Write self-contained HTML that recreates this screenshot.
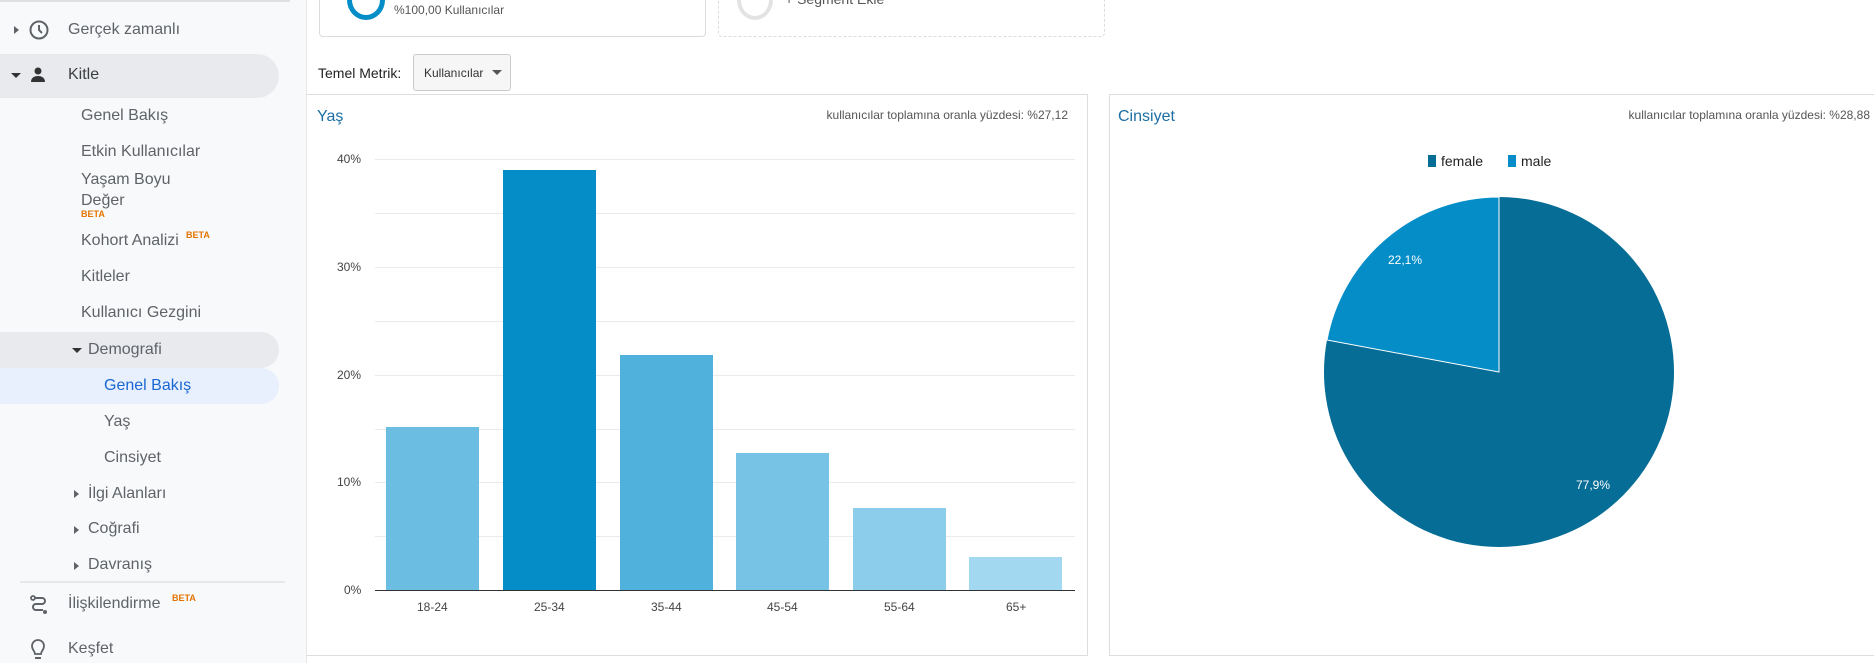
<!DOCTYPE html>
<html><head><meta charset="utf-8"><style>
*{margin:0;padding:0;box-sizing:border-box}
body{width:1874px;height:663px;overflow:hidden;background:#fff;font-family:"Liberation Sans",sans-serif;position:relative}
.sb{position:absolute;left:0;top:0;width:307px;height:663px;background:#f8f9fa;border-right:1px solid #e6e6e6}
.t{position:absolute;color:#5f6368;font-size:16px;white-space:nowrap}
.pill{position:absolute;left:0;width:279px;border-radius:0 22px 22px 0}
.beta{color:#e37400;font-size:9px;font-weight:bold;position:absolute}
.tri{position:absolute;width:0;height:0}
.down{border-left:5px solid transparent;border-right:5px solid transparent;border-top:5px solid #333}
.right{border-top:4px solid transparent;border-bottom:4px solid transparent;border-left:5px solid #5f6368}
.c{position:absolute;font-size:12px;color:#444;white-space:nowrap}
.bar{position:absolute;width:93px}
.grid{position:absolute;left:375px;width:700px;height:1px;background:#ebebeb}
</style></head><body>
<div class="sb">
 <div style="position:absolute;left:0;top:0;width:290px;height:2px;background:#e0e0e0"></div>
 <div class="tri right" style="left:14px;top:26px"></div>
 <svg style="position:absolute;left:28px;top:19px" width="22" height="22" viewBox="0 0 22 22"><circle cx="11" cy="11" r="8.5" fill="none" stroke="#5f6368" stroke-width="2"/><path d="M11 6v5l3 3" fill="none" stroke="#5f6368" stroke-width="2"/></svg>
 <div class="t" style="left:68px;top:21px">Gerçek zamanlı</div>
 <div class="pill" style="top:54px;height:44px;background:#e8eaed"></div>
 <div class="tri down" style="left:11px;top:73px"></div>
 <svg style="position:absolute;left:29px;top:66px" width="18" height="18" viewBox="0 0 18 18"><circle cx="9" cy="5" r="3.5" fill="#333"/><path d="M2 16c0-4 3-6 7-6s7 2 7 6z" fill="#333"/></svg>
 <div class="t" style="left:68px;top:66px;color:#3c4043">Kitle</div>
 <div class="t" style="left:81px;top:107px">Genel Bakış</div>
 <div class="t" style="left:81px;top:143px">Etkin Kullanıcılar</div>
 <div class="t" style="left:81px;top:171px">Yaşam Boyu</div>
 <div class="t" style="left:81px;top:192px">Değer</div>
 <div class="beta" style="left:81px;top:209px">BETA</div>
 <div class="t" style="left:81px;top:232px">Kohort Analizi</div>
 <div class="beta" style="left:186px;top:230px">BETA</div>
 <div class="t" style="left:81px;top:268px">Kitleler</div>
 <div class="t" style="left:81px;top:304px">Kullanıcı Gezgini</div>
 <div class="pill" style="top:332px;height:36px;background:#e8eaed"></div>
 <div class="tri down" style="left:72px;top:348px"></div>
 <div class="t" style="left:88px;top:341px">Demografi</div>
 <div class="pill" style="top:368px;height:36px;background:#e8f0fe"></div>
 <div class="t" style="left:104px;top:377px;color:#1967d2">Genel Bakış</div>
 <div class="t" style="left:104px;top:413px">Yaş</div>
 <div class="t" style="left:104px;top:449px">Cinsiyet</div>
 <div class="tri right" style="left:74px;top:490px"></div>
 <div class="t" style="left:88px;top:485px">İlgi Alanları</div>
 <div class="tri right" style="left:74px;top:526px"></div>
 <div class="t" style="left:88px;top:520px">Coğrafi</div>
 <div class="tri right" style="left:74px;top:562px"></div>
 <div class="t" style="left:88px;top:556px">Davranış</div>
 <div style="position:absolute;left:20px;top:581px;width:265px;height:2px;background:#e8e8e8"></div>
 <svg style="position:absolute;left:28px;top:594px" width="22" height="22" viewBox="0 0 22 22"><circle cx="5" cy="4" r="2" fill="none" stroke="#5f6368" stroke-width="1.8"/><circle cx="17" cy="18" r="2" fill="#5f6368"/><path d="M7 4h7a3 3 0 0 1 0 6H8a3 3 0 0 0 0 6h7" fill="none" stroke="#5f6368" stroke-width="2"/></svg>
 <div class="t" style="left:68px;top:595px">İlişkilendirme</div>
 <div class="beta" style="left:172px;top:593px">BETA</div>
 <svg style="position:absolute;left:30px;top:639px" width="16" height="22" viewBox="0 0 16 22"><path d="M5 15c0-3-3-4-3-8a6 6 0 0 1 12 0c0 4-3 5-3 8z" fill="none" stroke="#5f6368" stroke-width="1.8"/><path d="M5 19h6" stroke="#5f6368" stroke-width="2"/></svg>
 <div class="t" style="left:68px;top:640px">Keşfet</div>
</div>

<div style="position:absolute;left:319px;top:-10px;width:387px;height:47px;border:1px solid #dadce0;border-radius:4px"></div>
<div style="position:absolute;left:347px;top:-20px;width:38px;height:40px;border:5px solid #058dc7;border-radius:50%"></div>
<div class="c" style="left:394px;top:3px;color:#555">%100,00 Kullanıcılar</div>
<div style="position:absolute;left:718px;top:-10px;width:387px;height:47px;border:1px dashed #dadce0;border-radius:4px"></div>
<div style="position:absolute;left:737px;top:-20px;width:36px;height:40px;border:4px solid #e3e3e3;border-radius:50%"></div>
<div class="c" style="left:785px;top:-9px;font-size:14px;color:#555">+ Segment Ekle</div>

<div class="c" style="left:318px;top:65px;font-size:14px;color:#222">Temel Metrik:</div>
<div style="position:absolute;left:413px;top:54px;width:98px;height:37px;border:1px solid #ccc;border-radius:3px;background:#f6f6f6"></div>
<div class="c" style="left:424px;top:66px;font-size:12px;color:#333">Kullanıcılar</div>
<div class="tri down" style="left:492px;top:70px;border-top-color:#555"></div>

<div style="position:absolute;left:307px;top:94px;width:781px;height:562px;border:1px solid #ddd;border-left:none"></div>
<div style="position:absolute;left:1109px;top:94px;width:770px;height:562px;border:1px solid #ddd"></div>

<div class="c" style="left:317px;top:108px;font-size:16px;color:#1c6ea4">Yaş</div>
<div class="c" style="right:806px;top:108px;color:#555">kullanıcılar toplamına oranla yüzdesi: %27,12</div>
<div class="grid" style="top:159px"></div><div class="grid" style="top:213px"></div>
<div class="grid" style="top:267px"></div><div class="grid" style="top:321px"></div>
<div class="grid" style="top:375px"></div><div class="grid" style="top:429px"></div>
<div class="grid" style="top:482px"></div><div class="grid" style="top:536px"></div>
<div class="c" style="left:337px;top:152px">40%</div>
<div class="c" style="left:337px;top:260px">30%</div>
<div class="c" style="left:337px;top:368px">20%</div>
<div class="c" style="left:337px;top:475px">10%</div>
<div class="c" style="left:344px;top:583px">0%</div>
<div class="bar" style="left:386px;top:427px;height:163px;background:#6bbde2"></div>
<div class="bar" style="left:503px;top:170px;height:420px;background:#058dc7"></div>
<div class="bar" style="left:620px;top:355px;height:235px;background:#50b1dc"></div>
<div class="bar" style="left:736px;top:453px;height:137px;background:#77c3e5"></div>
<div class="bar" style="left:853px;top:508px;height:82px;background:#8ccdec"></div>
<div class="bar" style="left:969px;top:557px;height:33px;background:#a3d8f1"></div>
<div style="position:absolute;left:375px;top:590px;width:700px;height:1px;background:#333"></div>
<div class="c" style="left:417px;top:600px">18-24</div>
<div class="c" style="left:534px;top:600px">25-34</div>
<div class="c" style="left:651px;top:600px">35-44</div>
<div class="c" style="left:767px;top:600px">45-54</div>
<div class="c" style="left:884px;top:600px">55-64</div>
<div class="c" style="left:1006px;top:600px">65+</div>

<div class="c" style="left:1118px;top:108px;font-size:16px;color:#1c6ea4">Cinsiyet</div>
<div class="c" style="right:4px;top:108px;color:#555">kullanıcılar toplamına oranla yüzdesi: %28,88</div>
<div style="position:absolute;left:1428px;top:155px;width:8px;height:12px;background:#066d96"></div>
<div class="c" style="left:1441px;top:153px;font-size:14px;color:#222">female</div>
<div style="position:absolute;left:1508px;top:155px;width:8px;height:12px;background:#058dc7"></div>
<div class="c" style="left:1521px;top:153px;font-size:14px;color:#222">male</div>
<svg style="position:absolute;left:0;top:0" width="1874" height="663">
<circle cx="1499" cy="372" r="175" fill="#066d96"/>
<path d="M1499 372L1499 197A175 175 0 0 0 1327 340Z" fill="#058dc7" stroke="#fff" stroke-width="1"/>
</svg>
<div class="c" style="left:1388px;top:253px;color:#fff">22,1%</div>
<div class="c" style="left:1576px;top:478px;color:#fff">77,9%</div>
</body></html>
